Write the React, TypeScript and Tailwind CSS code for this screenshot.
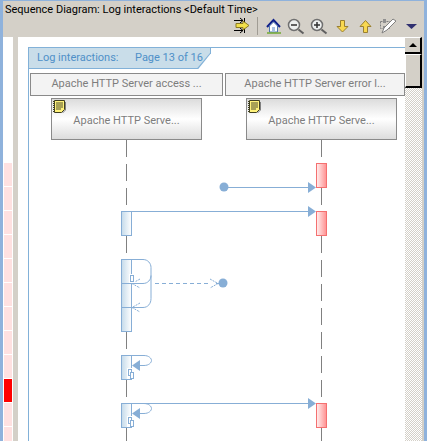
const blue = '#87aed6';

function ToolbarIcons() {
  return (
    <svg width="190" height="20" viewBox="234 17 190 20" className="block">
      {/* merge arrows */}
      <path d="M234 20.500h9M234 30.500h9M244.500 18v5M244.500 28v5M240 18l3 2.500-3 2.500M240 28l3 2.500-3 2.500" fill="none" stroke="#000" />
      <path d="M236 23.500h7v-2.500l6 4.500-6 4.500v-2.500h-7z" fill="#f2e04a" stroke="#8a7a20" />
      <path d="M257.500 17v18" stroke="#a09c94" />
      {/* home */}
      <path d="M267 27l6.500-7 6.500 7" fill="none" stroke="#10208a" strokeWidth="2" />
      <path d="M269.500 26l4-4 4 4v6h-8z" fill="#fff" stroke="#5078b0" />
      <path d="M272 27h3v5h-3z" fill="#a8c0e0" />
      <path d="M267 33h14" stroke="#70a830" strokeWidth="1.500" />
      {/* zoom out */}
      <circle cx="294" cy="25" r="5.500" fill="#eef0f0" stroke="#707070" strokeWidth="1.500" />
      <path d="M291 25h6" stroke="#303030" strokeWidth="1.500" />
      <path d="M298.500 29.500l5 4" stroke="#606060" strokeWidth="2" />
      {/* zoom in */}
      <circle cx="317" cy="25" r="5.500" fill="#eef0f0" stroke="#707070" strokeWidth="1.500" />
      <path d="M314 25h6M317 22v6" stroke="#303030" strokeWidth="1.500" />
      <path d="M321.500 29.500l5 4" stroke="#606060" strokeWidth="2" />
      {/* down */}
      <path d="M340.500 20.500h4v6h3.500l-5.500 5.500-5.500-5.500h3.500z" fill="#f8d850" stroke="#9a8030" />
      {/* up */}
      <path d="M363.500 32.500h4v-6h3.500l-5.500-6-5.500 6h3.500z" fill="#f8d850" stroke="#9a8030" />
      {/* brush */}
      <path d="M380.500 21.500h9v7h-9z" fill="none" stroke="#808080" strokeDasharray="2 1" />
      <path d="M383 19h3v4h-3zM383 26h3v4h-3z" fill="#909090" />
      <path d="M393 19l3 2-9 9-5 3 2-5z" fill="#fff" stroke="#808080" />
      {/* menu */}
      <path d="M406 24h11l-5.500 5z" fill="#303070" />
    </svg>
  );
}

function NoteIcon() {
  return (
    <svg width="13" height="14" viewBox="0 0 13 14" className="block">
      <path d="M1.500.5h10v9l-3 3h-7z" fill="#fff27a" stroke="#404020" />
      <path d="M.5 1v12" stroke="#404020" strokeDasharray="1 1" />
      <path d="M3 3h7M3 5h7M3 7h7M3 9h5" stroke="#505030" />
      <path d="M12.500 2v8l-3 3" fill="none" stroke="#808080" />
    </svg>
  );
}

function LifelineNode() {
  return (
    <div className="relative flex h-[42px] w-[151px] items-center justify-center border border-[#8a8a8a] bg-[linear-gradient(to_bottom,#dcdcdc,#ffffff_50%,#dcdcdc)] pt-[4px] text-[#7d7d7d]">
      Apache HTTP Serve...
      <div className="absolute left-[1px] top-[1px]">
        <NoteIcon />
      </div>
    </div>
  );
}

function Lifelines() {
  return (
    <svg width="376" height="301" viewBox="29 140 376 301" className="block">
      <defs>
        <linearGradient id="red" x1="0" x2="1" y1="0" y2="0">
          <stop offset="0" stopColor="#fff0f0" />
          <stop offset="1" stopColor="#ff9090" />
        </linearGradient>
        <linearGradient id="blue" x1="0" x2="1" y1="0" y2="0">
          <stop offset="0" stopColor="#c4daea" />
          <stop offset="1" stopColor="#ffffff" />
        </linearGradient>
      </defs>

      <path d="M126.500 140V441" stroke="#808080" strokeDasharray="17 7" />
      <path d="M321.500 140V441" stroke="#808080" strokeDasharray="17 7" />

      {[163, 211, 403].map((y) => (
        <rect key={y} x="316.500" y={y + 0.5} width="10" height="24" fill="url(#red)" stroke="#f47070" />
      ))}
      {[211, 259, 355, 403].map((y) => (
        <rect key={y} x="121.500" y={y + 0.5} width="10" height={y === 259 ? 72 : 24} fill="url(#blue)" stroke={blue} />
      ))}
      <path d="M122 283.500h10M122 307.500h10" stroke={blue} />

      {/* found message */}
      <circle cx="224" cy="187" r="4.500" fill={blue} />
      <path d="M224 187.500h86M132 211.500h178M132 403.500h178" stroke={blue} />
      {[187, 211, 403].map((y) => (
        <path key={y} d={`M308 ${y - 5}l8 5.500-8 5.500z`} fill={blue} />
      ))}

      {/* self calls */}
      <path d="M132 259.500h11c5 0 8 4 8 8v31c0 5-3 9-8 9h-11" fill="none" stroke={blue} />
      <path d="M132 283.500h11c5 0 8-4 8-8" fill="none" stroke={blue} />
      <path d="M140 279l-8 4.500 8 4.500M140 303l-8 4.500 8 4.500" fill="none" stroke={blue} strokeDasharray="2 1" />
      <rect x="129" y="274" width="6" height="9" fill="#fff" />
      <rect x="130.500" y="275.500" width="3" height="6" fill="#fff" stroke={blue} />
      <path d="M155 283.500h56" stroke={blue} strokeDasharray="4 3" />
      <path d="M210 279l8 4.500-8 4.500" fill="none" stroke={blue} strokeDasharray="2 1" />
      <path d="M216 283.500h4" stroke={blue} />
      <circle cx="223" cy="283" r="4.500" fill={blue} />

      {[355, 403].map((y) => (
        <g key={y}>
          <path d={`M132 ${y + 0.5}h12c5 0 7.500 3 7.500 5s-2.500 5-7.500 5h-4`} fill="none" stroke={blue} />
          <path d={`M132 ${y + 10.500}l8-5.500v11z`} fill={blue} />
          <rect x="127" y={y + 13} width="8" height="11" fill="#fff" />
          <rect x="128.500" y={y + 14.500} width="3" height="6" fill="#fff" stroke={blue} />
          <rect x="130.500" y={y + 17.500} width="3" height="6" fill="#fff" stroke={blue} />
        </g>
      ))}
    </svg>
  );
}

export default function App() {
  const segments = Array.from({ length: 12 }, (_, i) => i);

  return (
    <div className="flex h-[441px] w-[427px] flex-col overflow-hidden border-x-[3px] border-t border-x-[#8fb2dc] border-t-[#8fb2dc] bg-[#d4d0c8] font-['Roboto',sans-serif] text-[11px]">
      <div className="h-[16px] pl-[2px] pt-px leading-[16px] text-black">
        Sequence Diagram: Log interactions &lt;Default Time&gt;
      </div>
      <div className="flex h-[20px] justify-end">
        <ToolbarIcons />
      </div>

      <div className="flex min-h-0 flex-1">
        {/* overview ruler */}
        <div className="flex w-[10px] shrink-0 flex-col gap-px bg-white pl-px pr-px pt-[126px]">
          {segments.map((i) => (
            <div key={i} className={i === 9 ? 'h-[23px] shrink-0 bg-[#ff0000]' : 'h-[23px] shrink-0 bg-[#ffe1e1]'} />
          ))}
        </div>
        <div className="w-[5px] shrink-0" />

        {/* diagram */}
        <div className="min-w-0 flex-1 bg-white pl-[10px] pt-[10px]">
          <div className="h-full border-l border-t border-[#82b1d8]">
            <div className="h-[21px] w-[182px] bg-[#82b1d8] [clip-path:polygon(0_0,100%_0,100%_25%,93%_100%,0_100%)]">
              <div className="flex h-[20px] w-[181px] items-center bg-[#c9dde9] pl-2 pt-px text-[#4f90c8] [clip-path:polygon(0_0,100%_0,100%_25%,93%_100%,0_100%)]">
                <span className="w-[98px]">Log interactions:</span>
                <span>Page 13 of 16</span>
              </div>
            </div>
            <div className="mt-[4px] flex gap-[2px] pl-px">
              <div className="flex h-[23px] w-[193px] items-center justify-center border border-[#8a8a8a] bg-[#f3f3f3] text-[#7d7d7d]">
                Apache HTTP Server access ...
              </div>
              <div className="flex h-[23px] w-[180px] items-center justify-center border border-[#8a8a8a] bg-[#f3f3f3] text-[#7d7d7d]">
                Apache HTTP Server error l...
              </div>
            </div>
            <div className="mt-[2px] flex gap-[44px] pl-[22px]">
              <LifelineNode />
              <LifelineNode />
            </div>
            <Lifelines />
          </div>
        </div>

        {/* scrollbar */}
        <div className="flex w-[17px] shrink-0 flex-col bg-[repeating-conic-gradient(#d4d0c8_0_25%,#ffffff_0_50%)] bg-[length:2px_2px]">
          <div className="flex h-[17px] items-center justify-center border-b-2 border-r-2 border-t border-b-black border-r-black border-t-white bg-[#d4d0c8]">
            <div className="h-0 w-0 border-x-[4px] border-b-[4px] border-x-transparent border-b-black" />
          </div>
          <div className="h-[34px] border-b-2 border-l border-r-2 border-t border-b-black border-l-white border-r-black border-t-white bg-[#d4d0c8]" />
        </div>
        <div className="w-[2px] shrink-0" />
      </div>
    </div>
  );
}
